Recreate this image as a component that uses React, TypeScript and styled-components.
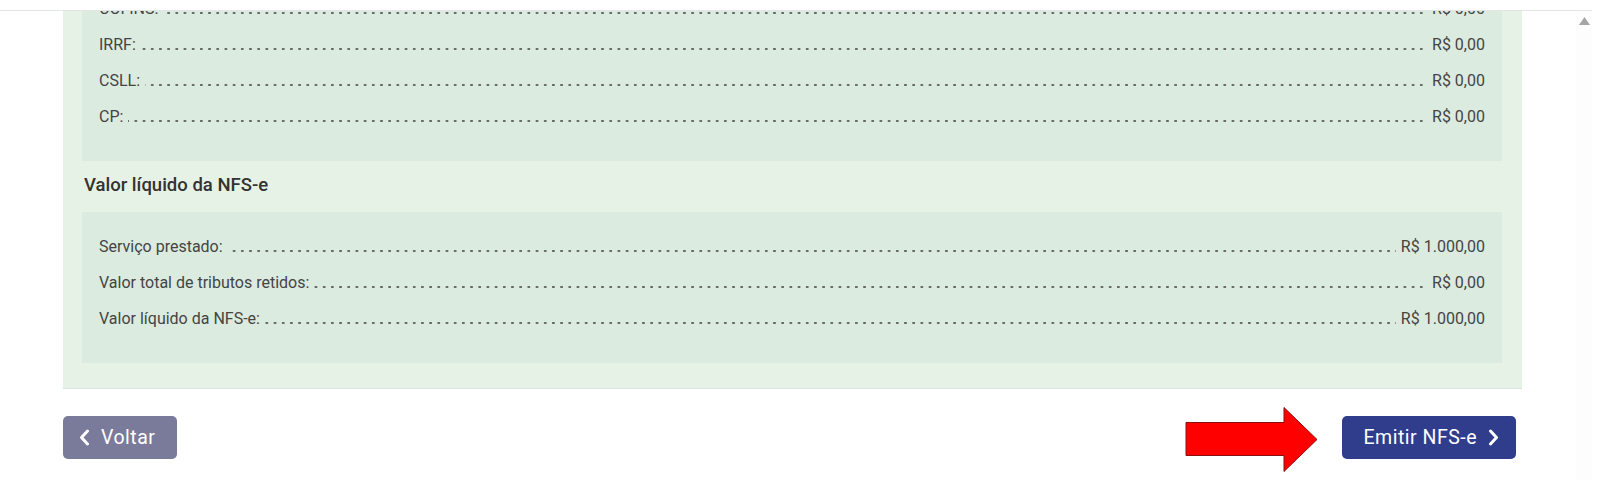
import styled, { createGlobalStyle } from "styled-components";

const GlobalStyle = createGlobalStyle`
  html, body {
    margin: 0;
    padding: 0;
    background: #ffffff;
  }
  body {
    font-family: Roboto, "Liberation Sans", sans-serif;
    color: #444;
  }
`;

const innerBg = "#dcebe0";

const App = () => {
  const retidos = [
    { label: "COFINS:", value: "R$ 0,00" },
    { label: "IRRF:", value: "R$ 0,00" },
    { label: "CSLL:", value: "R$ 0,00" },
    { label: "CP:", value: "R$ 0,00" },
  ];

  const liquido = [
    { label: "Serviço prestado:", value: "R$ 1.000,00" },
    { label: "Valor total de tributos retidos:", value: "R$ 0,00" },
    { label: "Valor líquido da NFS-e:", value: "R$ 1.000,00" },
  ];

  return (
    <>
      <GlobalStyle />
      <Page>
        <TopStrip />
        <Body>
          <Main>
            <Viewport>
              <Panel>
                <Box>
                  {retidos.map((item) => (
                    <Row key={item.label}>
                      <Label>{item.label}</Label>
                      <Value>{item.value}</Value>
                    </Row>
                  ))}
                </Box>
                <SectionTitle>Valor líquido da NFS-e</SectionTitle>
                <Box>
                  {liquido.map((item) => (
                    <Row key={item.label}>
                      <Label>{item.label}</Label>
                      <Value>{item.value}</Value>
                    </Row>
                  ))}
                </Box>
              </Panel>
            </Viewport>
            <Actions>
              <Button $variant="back">
                <Chevron viewBox="0 0 11 17">
                  <path d="M8.5 2 L2.5 8.5 L8.5 15" />
                </Chevron>
                Voltar
              </Button>
              <RightGroup>
                <Arrow viewBox="0 0 133 66">
                  <polygon
                    points="1,15.5 99,15.5 99,0.5 132,32.5 99,64.5 99,48.5 1,48.5"
                    fill="#ff0000"
                    stroke="#8a1010"
                    strokeWidth="1"
                  />
                </Arrow>
                <Button $variant="primary">
                  Emitir NFS-e
                  <Chevron viewBox="0 0 11 17">
                    <path d="M2.5 2 L8.5 8.5 L2.5 15" />
                  </Chevron>
                </Button>
              </RightGroup>
            </Actions>
          </Main>
          <Scrollbar>
            <ScrollArrow viewBox="0 0 11 8">
              <polygon points="5.5,0 11,8 0,8" fill="#a5a5a5" />
            </ScrollArrow>
          </Scrollbar>
        </Body>
      </Page>
    </>
  );
};

export default App;

const Page = styled.div`
  width: 1600px;
  height: 480px;
  overflow: hidden;
  display: flex;
  flex-direction: column;
`;

const TopStrip = styled.div`
  height: 10px;
  margin-right: 8px;
  background: #ffffff;
  border-bottom: 1px solid #e4e4e4;
  flex-shrink: 0;
`;

const Body = styled.div`
  display: flex;
  flex: 1;
`;

const Main = styled.div`
  width: 1576px;
  padding-left: 63px;
  box-sizing: border-box;
`;

const Viewport = styled.div`
  overflow: hidden;
  width: 1459px;
`;

const Panel = styled.div`
  margin-top: -57px;
  padding: 20px 20px 25px 19px;
  background: #e7f2e6;
  box-shadow: 0 1px 1px rgba(0, 0, 0, 0.06);
  border-bottom: 1px solid #dde6dc;
`;

const Box = styled.div`
  background: ${innerBg};
  padding: 16px 17px 27px;
`;

const Row = styled.div`
  display: flex;
  justify-content: space-between;
  align-items: center;
  height: 36px;
  font-size: 16px;
  color: #444;
  background-image: radial-gradient(circle at center, #666 0 1px, transparent 1.45px);
  background-size: 8.2px 4px;
  background-repeat: repeat-x;
  background-position: 0 20.8px;
`;

const Label = styled.span`
  background: ${innerBg};
  padding-right: 5px;
`;

const Value = styled.span`
  background: ${innerBg};
  padding-left: 5px;
`;

const SectionTitle = styled.h3`
  margin: 0;
  padding: 12px 0 15px 2px;
  line-height: 24px;
  font-size: 18.5px;
  font-weight: 500;
  color: #333;
`;

const Actions = styled.div`
  width: 1459px;
  padding-top: 27px;
  display: flex;
  justify-content: space-between;
  align-items: flex-start;
`;

const RightGroup = styled.div`
  display: flex;
  align-items: flex-start;
  gap: 24px;
  margin-right: 6px;
`;

const Arrow = styled.svg`
  width: 133px;
  height: 66px;
  margin-top: -9px;
`;

const Button = styled.button<{ $variant: "back" | "primary" }>`
  display: inline-flex;
  align-items: center;
  gap: 11px;
  height: 43px;
  border: none;
  border-radius: 5px;
  color: #ffffff;
  font-family: Roboto, "Liberation Sans", sans-serif;
  font-size: 19.5px;
  letter-spacing: 0.5px;
  white-space: nowrap;
  cursor: pointer;
  box-sizing: border-box;
  background: ${(p) => (p.$variant === "back" ? "#7a7a9b" : "#303d8d")};
  padding: ${(p) => (p.$variant === "back" ? "0 22px 0 16px" : "0 17px 0 22px")};
`;

const Chevron = styled.svg`
  width: 11px;
  height: 17px;
  flex-shrink: 0;
  fill: none;
  stroke: #ffffff;
  stroke-width: 3;
  stroke-linecap: round;
  stroke-linejoin: round;
`;

const Scrollbar = styled.div`
  width: 16px;
  padding-top: 6px;
  display: flex;
  justify-content: center;
  align-items: flex-start;
  background: #fdfdfd;
`;

const ScrollArrow = styled.svg`
  width: 11px;
  height: 8px;
`;
